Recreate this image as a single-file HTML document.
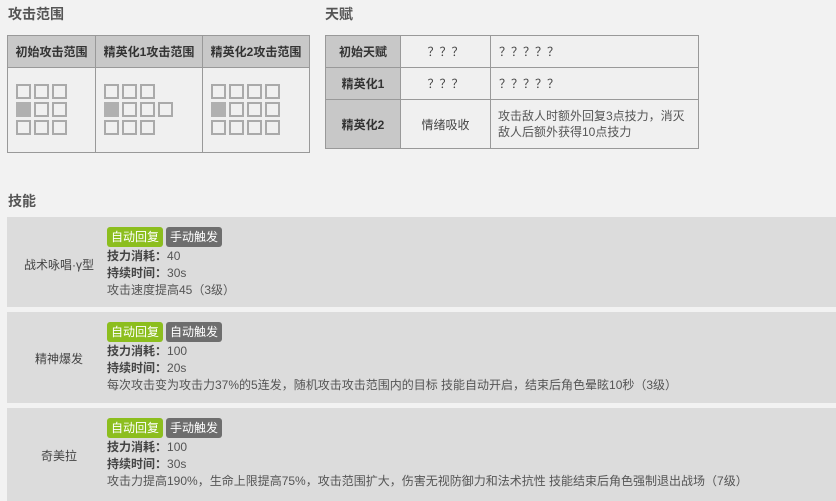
<!DOCTYPE html>
<html><head><meta charset="utf-8"><style>
*{margin:0;padding:0;box-sizing:border-box}
body{width:836px;height:501px;background:#f2f2f2;font-family:"Liberation Sans","Noto Sans CJK SC",sans-serif;font-size:12px;color:#444;position:relative;overflow:hidden}
.h{position:absolute;font-size:14px;font-weight:bold;color:#555}
table{position:absolute;border-collapse:collapse}
td{border:1px solid #999;text-align:center;vertical-align:middle}
.th{background:#c8c8c8;font-weight:bold;color:#333}
.c{background:#f0f0f0}
.g{position:relative;height:60px}
.s{position:absolute;width:15px;height:15px;border:2px solid #aaa}
.s.f{background:#b0b0b0;border-color:#b0b0b0}
.sk{position:absolute;left:7px;width:829px;background:#dcdcdc}
.nm{position:absolute;left:0;width:104px;text-align:center;color:#444}
.ct{position:absolute;left:100px;line-height:17px;color:#555}
.tag{display:inline-block;height:20px;line-height:20px;padding:0 4px;border-radius:3px;color:#fff;font-size:12px;margin-right:3px;margin-bottom:1px}
.gr{background:#8cbe1e}.gy{background:#6e6e6e}
b{color:#444}
</style></head><body>
<div class="h" style="left:8px;top:4px">攻击范围</div>
<div class="h" style="left:325px;top:4px">天赋</div>
<table style="left:7px;top:35px;width:303px">
<tr style="height:32px"><td class="th" style="width:88px">初始攻击范围</td><td class="th" style="width:107px">精英化1攻击范围</td><td class="th">精英化2攻击范围</td></tr>
<tr style="height:85px"><td class="c"><div class="g" id="g1"></div></td><td class="c"><div class="g" id="g2"></div></td><td class="c"><div class="g" id="g3"></div></td></tr>
</table>
<table style="left:325px;top:35px;width:374px">
<tr style="height:32px"><td class="th" style="width:75px">初始天赋</td><td class="c" style="width:90px">？？？</td><td class="c" style="text-align:left;padding-left:8px">？？？？？</td></tr>
<tr style="height:32px"><td class="th">精英化1</td><td class="c">？？？</td><td class="c" style="text-align:left;padding-left:8px">？？？？？</td></tr>
<tr style="height:49px"><td class="th">精英化2</td><td class="c">情绪吸收</td><td class="c" style="text-align:left;padding-left:7px;padding-right:4px;line-height:16px;color:#555">攻击敌人时额外回复3点技力，消灭<br>敌人后额外获得10点技力</td></tr>
</table>
<div class="h" style="left:8px;top:191px">技能</div>
<div class="sk" style="top:217px;height:90px"><div class="nm" style="top:39px">战术咏唱·γ型</div><div class="ct" style="top:10px"><span class="tag gr">自动回复</span><span class="tag gy">手动触发</span><br><b>技力消耗：</b>40<br><b>持续时间：</b>30s<br>攻击速度提高45（3级）</div></div>
<div class="sk" style="top:312px;height:91px"><div class="nm" style="top:38px">精神爆发</div><div class="ct" style="top:10px"><span class="tag gr">自动回复</span><span class="tag gy">自动触发</span><br><b>技力消耗：</b>100<br><b>持续时间：</b>20s<br>每次攻击变为攻击力37%的5连发，随机攻击攻击范围内的目标 技能自动开启，结束后角色晕眩10秒（3级）</div></div>
<div class="sk" style="top:408px;height:93px"><div class="nm" style="top:39px">奇美拉</div><div class="ct" style="top:10px"><span class="tag gr">自动回复</span><span class="tag gy">手动触发</span><br><b>技力消耗：</b>100<br><b>持续时间：</b>30s<br>攻击力提高190%，生命上限提高75%，攻击范围扩大，伤害无视防御力和法术抗性 技能结束后角色强制退出战场（7级）</div></div>
<script>
function grid(id,rows){var g=document.getElementById(id);rows.forEach(function(r,ri){for(var i=0;i<r;i++){var d=document.createElement('div');d.className='s'+(ri==1&&i==0?' f':'');d.style.left=(8+i*18)+'px';d.style.top=(4+ri*18)+'px';g.appendChild(d);}});}
grid('g1',[3,3,3]);grid('g2',[3,4,3]);grid('g3',[4,4,4]);
</script>
</body></html>
